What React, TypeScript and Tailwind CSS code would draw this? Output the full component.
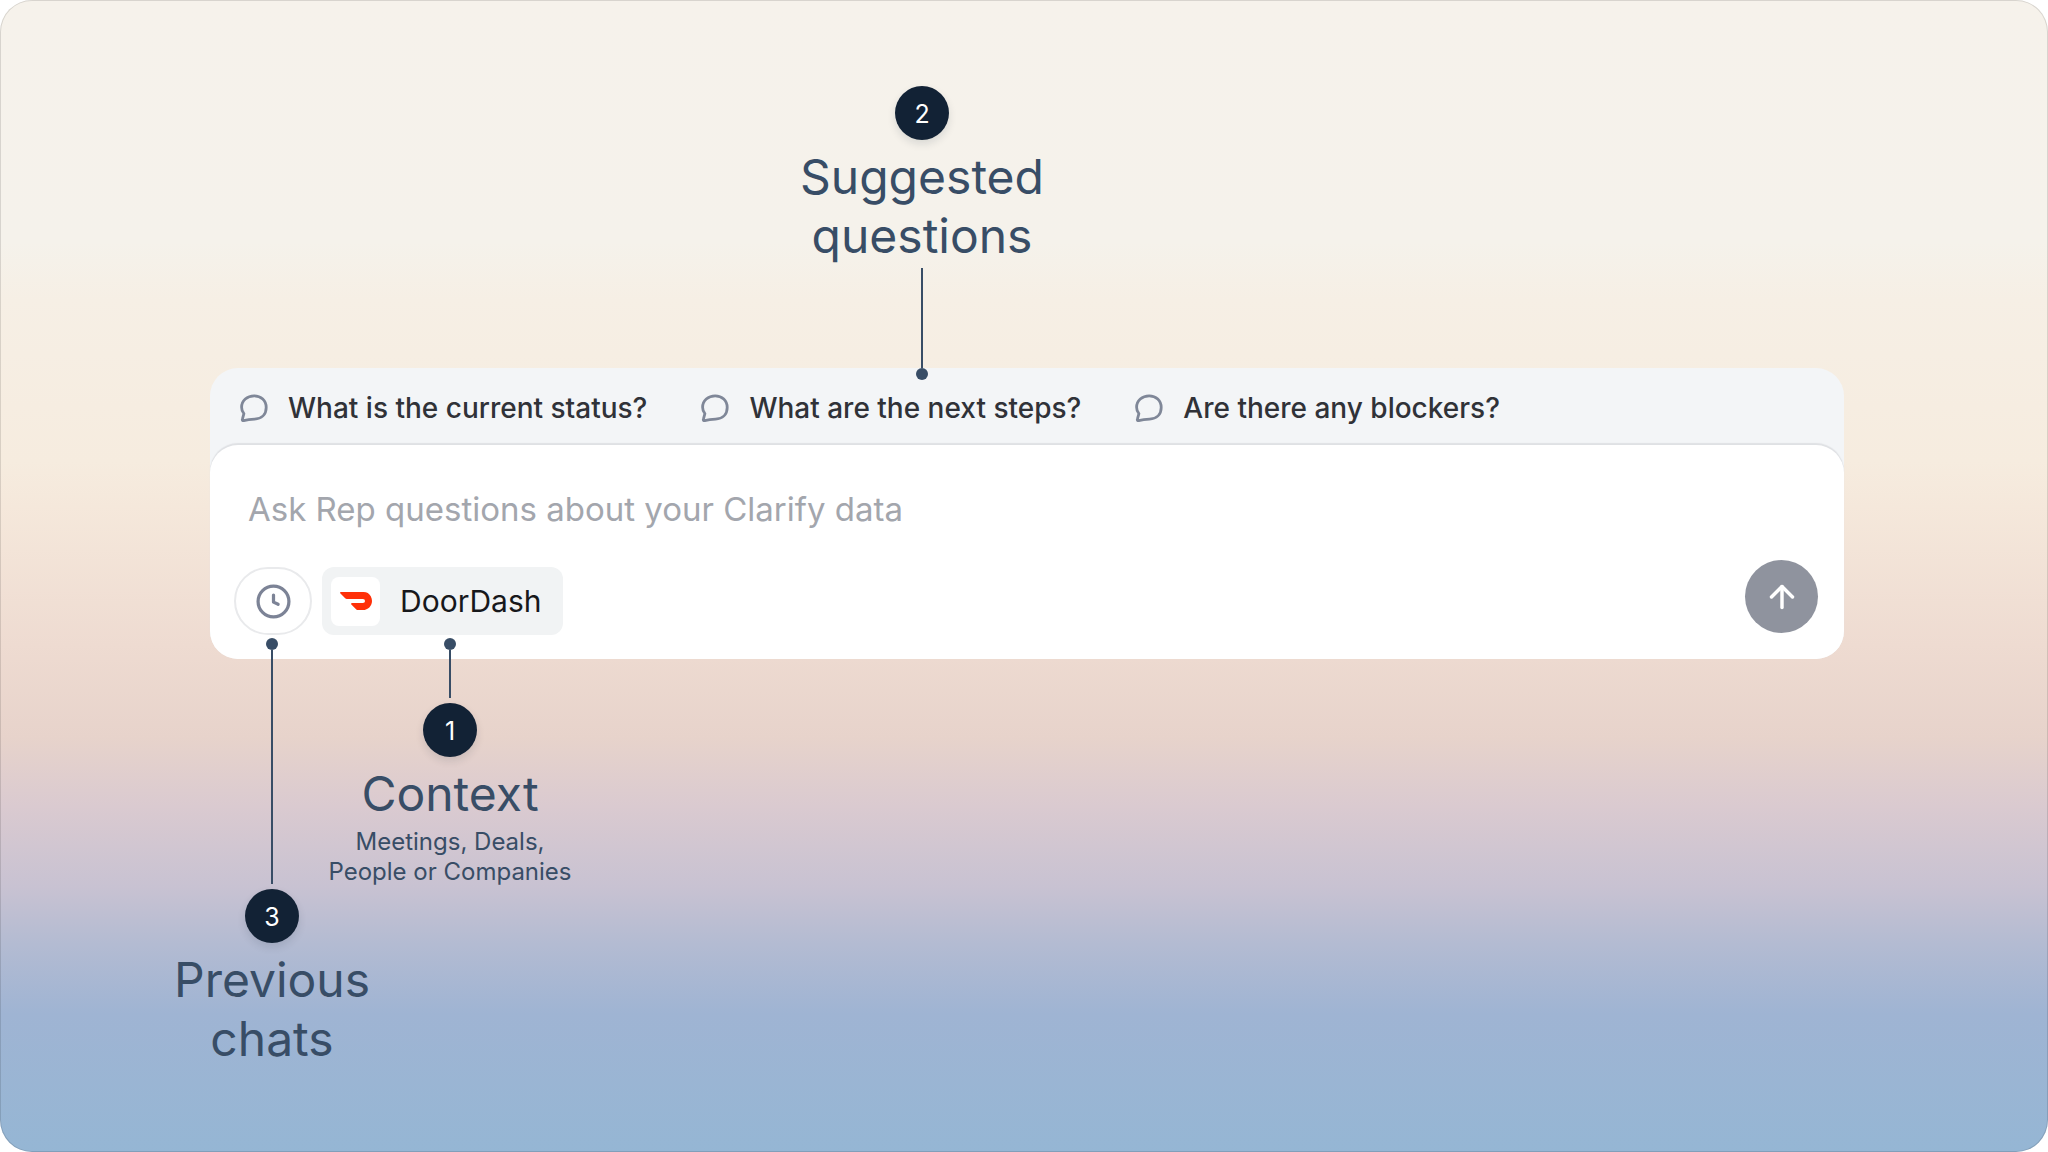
import React from 'react';
import { ArrowUp } from 'lucide-react';
import { SiDoordash } from 'react-icons/si';

const SUGGESTIONS = [
    'What is the current status?',
    'What are the next steps?',
    'Are there any blockers?',
];

const ChatIcon = () => (
    <svg width="28" height="28" viewBox="0 0 28 28" fill="none" stroke="currentColor" strokeWidth="2.8" strokeLinecap="round" strokeLinejoin="round" aria-hidden="true">
        <path d="M14.2 1.8C21 1.8 26.2 6.4 26.2 13.4C26.2 20.6 21.4 24.8 14.6 25.1C10.6 25.3 7.2 25.7 3.7 26.6C2.5 26.9 2.1 26.2 2.4 25.2L3.9 19.6C2.4 17.9 1.6 15.6 1.6 13.2C1.6 6.4 7.2 1.8 14.2 1.8Z" />
    </svg>
);

const HistoryIcon = () => (
    <svg width="37" height="37" viewBox="0 0 24 24" fill="none" stroke="currentColor" strokeWidth="2.1" strokeLinecap="round" strokeLinejoin="round" aria-hidden="true">
        <circle cx="12" cy="12" r="10" />
        <path d="M12 7.8v4.6l3 1.4" />
    </svg>
);

const Badge = ({ children }: { children: React.ReactNode }) => (
    <span className="flex size-[54px] shrink-0 items-center justify-center rounded-full bg-[#122235] pt-0.5 text-[25px] leading-[30px] text-white shadow-[0_4px_8px_rgba(18,34,53,0.12)]">
        {children}
    </span>
);

const Dot = () => <span className="size-3 shrink-0 rounded-full bg-[#384d66]"></span>;

const Title = ({ children }: { children: React.ReactNode }) => (
    <h2 className="text-center text-[48px] leading-[59px] font-normal whitespace-nowrap text-[#384d66]">{children}</h2>
);

export default function App() {
    return (
        <main className="min-h-screen rounded-[32px] bg-[linear-gradient(180deg,#f6f2eb_0%,#f5f2eb_21%,#f6efe5_26%,#f6ecdf_40%,#f5e8db_44%,#eedbd1_56%,#e7d3cb_64%,#dacad0_70%,#c8c2d2_77%,#b3bbd2_82%,#9fb4d3_88%,#95b6d4_100%)] pt-[86px] pr-[204px] pl-[210px] font-['Inter',sans-serif] shadow-[inset_0_0_0_1px_rgba(0,0,0,0.12)]">
            {/* Callout above the composer */}
            <div className="relative z-10 -mb-3 ml-[588px] flex w-[248px] flex-col items-center">
                <Badge>2</Badge>
                <div className="mt-[7px]">
                    <Title>Suggested<br />questions</Title>
                </div>
                <span className="mt-[3px] h-[100px] w-0.5 bg-[#384d66]"></span>
                <Dot />
            </div>

            {/* Composer */}
            <section className="rounded-[28px] bg-[#f3f5f7]">
                <div className="flex h-[77px] items-center gap-[54px] px-[30px] pt-0.5">
                    {SUGGESTIONS.map((text) => (
                        <button key={text} type="button" className="flex items-center gap-5 text-[28px] leading-9 font-medium whitespace-nowrap text-[#303238]">
                            <span className="text-[#7f8798]"><ChatIcon /></span>
                            {text}
                        </button>
                    ))}
                </div>
                <form className="rounded-[28px] bg-white px-6 pt-11 pb-6 shadow-[0_-2px_1px_#dfe1e4]" onSubmit={(e) => e.preventDefault()}>
                    <input
                        type="text"
                        aria-label="Ask Rep"
                        placeholder="Ask Rep questions about your Clarify data"
                        className="block h-10 w-full px-3.5 text-[33px] leading-10 outline-none placeholder:text-[#a3a6ad]"
                    />
                    <div className="mt-[31px] flex items-end">
                        <button type="button" aria-label="Previous chats" className="flex h-[68px] w-[78px] items-center justify-center rounded-full border-2 border-[#e9eaec] text-[#7c8396]">
                            <HistoryIcon />
                        </button>
                        <button type="button" className="ml-2.5 flex h-[68px] items-center gap-5 rounded-xl bg-[#f1f3f4] pr-[22px] pl-[9px] text-[30px] leading-9 text-[#17181b]">
                            <span className="flex size-[49px] items-center justify-center rounded-lg bg-white text-[#ff3008]">
                                <SiDoordash size={32} />
                            </span>
                            DoorDash
                        </button>
                        <button type="submit" aria-label="Send" className="mr-0.5 mb-0.5 ml-auto flex size-[73px] items-center justify-center rounded-full bg-[#8f939e] text-white">
                            <ArrowUp size={36} strokeWidth={2.3} />
                        </button>
                    </div>
                </form>
            </section>

            {/* Callouts below the composer */}
            <div className="relative z-10 -mt-[21px] -ml-[27px] flex">
                <div className="flex w-[178px] flex-col items-center">
                    <Dot />
                    <span className="mb-[5px] h-[234px] w-0.5 bg-[#384d66]"></span>
                    <Badge>3</Badge>
                    <div className="mt-[7px]">
                        <Title>Previous<br />chats</Title>
                    </div>
                </div>
                <div className="flex w-[178px] flex-col items-center">
                    <Dot />
                    <span className="mb-[5px] h-12 w-0.5 bg-[#384d66]"></span>
                    <Badge>1</Badge>
                    <div className="mt-[7px]">
                        <Title>Context</Title>
                    </div>
                    <p className="mt-1 text-center text-[24px] leading-[30px] whitespace-nowrap text-[#384d66]">
                        Meetings, Deals,<br />People or Companies
                    </p>
                </div>
            </div>
        </main>
    );
}
